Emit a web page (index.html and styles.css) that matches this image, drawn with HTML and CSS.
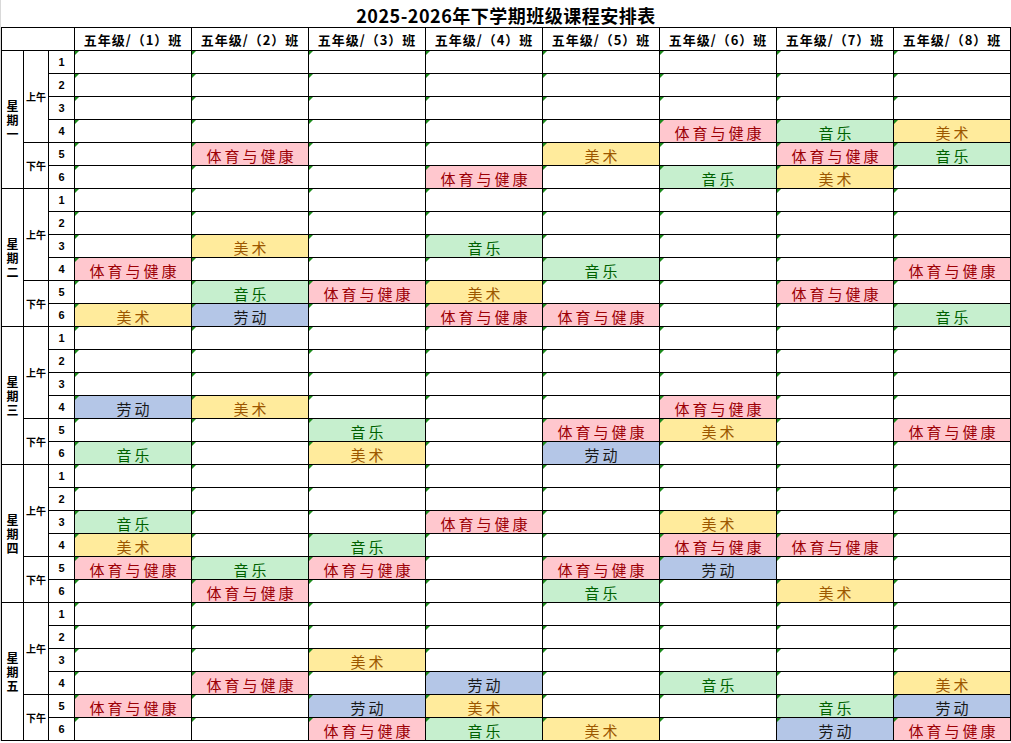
FILE: index.html
```html
<!DOCTYPE html>
<html lang="zh-CN">
<head>
<meta charset="utf-8">
<title>2025-2026年下学期班级课程安排表</title>
<link rel="stylesheet" href="styles.css">
</head>
<body>
<div class="page">
  <h1 class="title">2025-2026年下学期班级课程安排表</h1>
  <div class="sheet">
    <div class="corner"></div>
    <div class="h">五年级/（1）班</div><div class="h">五年级/（2）班</div><div class="h">五年级/（3）班</div><div class="h">五年级/（4）班</div><div class="h">五年级/（5）班</div><div class="h">五年级/（6）班</div><div class="h">五年级/（7）班</div><div class="h">五年级/（8）班</div>

    <!-- 星期一 -->
    <div class="day">星<br>期<br>一</div>
    <div class="half am">上午</div>
    <div class="n">1</div><div class="c"></div><div class="c"></div><div class="c"></div><div class="c"></div><div class="c"></div><div class="c"></div><div class="c"></div><div class="c"></div>
    <div class="n">2</div><div class="c"></div><div class="c"></div><div class="c"></div><div class="c"></div><div class="c"></div><div class="c"></div><div class="c"></div><div class="c"></div>
    <div class="n">3</div><div class="c"></div><div class="c"></div><div class="c"></div><div class="c"></div><div class="c"></div><div class="c"></div><div class="c"></div><div class="c"></div>
    <div class="n">4</div><div class="c"></div><div class="c"></div><div class="c"></div><div class="c"></div><div class="c"></div><div class="c pe">体育与健康</div><div class="c gr">音乐</div><div class="c ye">美术</div>
    <div class="half pm">下午</div>
    <div class="n">5</div><div class="c"></div><div class="c pe">体育与健康</div><div class="c"></div><div class="c"></div><div class="c ye">美术</div><div class="c"></div><div class="c pe">体育与健康</div><div class="c gr">音乐</div>
    <div class="n">6</div><div class="c"></div><div class="c"></div><div class="c"></div><div class="c pe">体育与健康</div><div class="c"></div><div class="c gr">音乐</div><div class="c ye">美术</div><div class="c"></div>

    <!-- 星期二 -->
    <div class="day">星<br>期<br>二</div>
    <div class="half am">上午</div>
    <div class="n">1</div><div class="c"></div><div class="c"></div><div class="c"></div><div class="c"></div><div class="c"></div><div class="c"></div><div class="c"></div><div class="c"></div>
    <div class="n">2</div><div class="c"></div><div class="c"></div><div class="c"></div><div class="c"></div><div class="c"></div><div class="c"></div><div class="c"></div><div class="c"></div>
    <div class="n">3</div><div class="c"></div><div class="c ye">美术</div><div class="c"></div><div class="c gr">音乐</div><div class="c"></div><div class="c"></div><div class="c"></div><div class="c"></div>
    <div class="n">4</div><div class="c pe">体育与健康</div><div class="c"></div><div class="c"></div><div class="c"></div><div class="c gr">音乐</div><div class="c"></div><div class="c"></div><div class="c pe">体育与健康</div>
    <div class="half pm">下午</div>
    <div class="n">5</div><div class="c"></div><div class="c gr">音乐</div><div class="c pe">体育与健康</div><div class="c ye">美术</div><div class="c"></div><div class="c"></div><div class="c pe">体育与健康</div><div class="c"></div>
    <div class="n">6</div><div class="c ye">美术</div><div class="c bl">劳动</div><div class="c"></div><div class="c pe">体育与健康</div><div class="c pe">体育与健康</div><div class="c"></div><div class="c"></div><div class="c gr">音乐</div>

    <!-- 星期三 -->
    <div class="day">星<br>期<br>三</div>
    <div class="half am">上午</div>
    <div class="n">1</div><div class="c"></div><div class="c"></div><div class="c"></div><div class="c"></div><div class="c"></div><div class="c"></div><div class="c"></div><div class="c"></div>
    <div class="n">2</div><div class="c"></div><div class="c"></div><div class="c"></div><div class="c"></div><div class="c"></div><div class="c"></div><div class="c"></div><div class="c"></div>
    <div class="n">3</div><div class="c"></div><div class="c"></div><div class="c"></div><div class="c"></div><div class="c"></div><div class="c"></div><div class="c"></div><div class="c"></div>
    <div class="n">4</div><div class="c bl">劳动</div><div class="c ye">美术</div><div class="c"></div><div class="c"></div><div class="c"></div><div class="c pe">体育与健康</div><div class="c"></div><div class="c"></div>
    <div class="half pm">下午</div>
    <div class="n">5</div><div class="c"></div><div class="c"></div><div class="c gr">音乐</div><div class="c"></div><div class="c pe">体育与健康</div><div class="c ye">美术</div><div class="c"></div><div class="c pe">体育与健康</div>
    <div class="n">6</div><div class="c gr">音乐</div><div class="c"></div><div class="c ye">美术</div><div class="c"></div><div class="c bl">劳动</div><div class="c"></div><div class="c"></div><div class="c"></div>

    <!-- 星期四 -->
    <div class="day">星<br>期<br>四</div>
    <div class="half am">上午</div>
    <div class="n">1</div><div class="c"></div><div class="c"></div><div class="c"></div><div class="c"></div><div class="c"></div><div class="c"></div><div class="c"></div><div class="c"></div>
    <div class="n">2</div><div class="c"></div><div class="c"></div><div class="c"></div><div class="c"></div><div class="c"></div><div class="c"></div><div class="c"></div><div class="c"></div>
    <div class="n">3</div><div class="c gr">音乐</div><div class="c"></div><div class="c"></div><div class="c pe">体育与健康</div><div class="c"></div><div class="c ye">美术</div><div class="c"></div><div class="c"></div>
    <div class="n">4</div><div class="c ye">美术</div><div class="c"></div><div class="c gr">音乐</div><div class="c"></div><div class="c"></div><div class="c pe">体育与健康</div><div class="c pe">体育与健康</div><div class="c"></div>
    <div class="half pm">下午</div>
    <div class="n">5</div><div class="c pe">体育与健康</div><div class="c gr">音乐</div><div class="c pe">体育与健康</div><div class="c"></div><div class="c pe">体育与健康</div><div class="c bl">劳动</div><div class="c"></div><div class="c"></div>
    <div class="n">6</div><div class="c"></div><div class="c pe">体育与健康</div><div class="c"></div><div class="c"></div><div class="c gr">音乐</div><div class="c"></div><div class="c ye">美术</div><div class="c"></div>

    <!-- 星期五 -->
    <div class="day">星<br>期<br>五</div>
    <div class="half am">上午</div>
    <div class="n">1</div><div class="c"></div><div class="c"></div><div class="c"></div><div class="c"></div><div class="c"></div><div class="c"></div><div class="c"></div><div class="c"></div>
    <div class="n">2</div><div class="c"></div><div class="c"></div><div class="c"></div><div class="c"></div><div class="c"></div><div class="c"></div><div class="c"></div><div class="c"></div>
    <div class="n">3</div><div class="c"></div><div class="c"></div><div class="c ye">美术</div><div class="c"></div><div class="c"></div><div class="c"></div><div class="c"></div><div class="c"></div>
    <div class="n">4</div><div class="c"></div><div class="c pe">体育与健康</div><div class="c"></div><div class="c bl">劳动</div><div class="c"></div><div class="c gr">音乐</div><div class="c"></div><div class="c ye">美术</div>
    <div class="half pm">下午</div>
    <div class="n">5</div><div class="c pe">体育与健康</div><div class="c"></div><div class="c bl">劳动</div><div class="c ye">美术</div><div class="c"></div><div class="c"></div><div class="c gr">音乐</div><div class="c bl">劳动</div>
    <div class="n">6</div><div class="c"></div><div class="c"></div><div class="c pe">体育与健康</div><div class="c gr">音乐</div><div class="c ye">美术</div><div class="c"></div><div class="c bl">劳动</div><div class="c pe">体育与健康</div>
  </div>
</div>
</body>
</html>
```

FILE: styles.css
```css
html, body {
  margin: 0;
  padding: 0;
  background: #ffffff;
}

.page {
  border-left: 1px solid #d9d9d9;
  width: 1010px;
  font-family: "Noto Sans CJK SC", "Liberation Sans", sans-serif;
  color: #000;
}

.title {
  margin: 0;
  height: 27px;
  box-sizing: border-box;
  padding-top: 4px;
  line-height: 23px;
  font-size: 18px;
  font-weight: bold;
  letter-spacing: 0.5px;
  text-align: center;
}

.sheet {
  display: grid;
  grid-template-columns: 21px 24px 25px repeat(8, 116px);
  grid-auto-rows: 22px;
  gap: 1px;
  padding: 1px;
  background: #000;
  width: max-content;
}

.sheet > div {
  background: #fff;
  display: flex;
  align-items: center;
  justify-content: center;
  overflow: hidden;
}

.corner {
  grid-column: span 3;
}

.h {
  font-size: 13px;
  font-weight: bold;
  letter-spacing: 1px;
  white-space: nowrap;
}

.day {
  grid-row: span 6;
  font-size: 12px;
  font-weight: bold;
  line-height: 14px;
  text-align: center;
}

.half {
  font-size: 10px;
  font-weight: bold;
  white-space: nowrap;
}

.am {
  grid-row: span 4;
}

.pm {
  grid-row: span 2;
}

.n {
  font-family: "Liberation Sans", "DejaVu Sans", sans-serif;
  font-size: 11px;
  font-weight: bold;
}

.c {
  position: relative;
  font-size: 15px;
  letter-spacing: 3px;
  text-indent: 3px;
  padding-top: 2px;
  box-sizing: border-box;
  white-space: nowrap;
}

.c::before {
  content: "";
  position: absolute;
  left: 0;
  top: 0;
  border-top: 4px solid #1c8c1c;
  border-right: 4px solid transparent;
}

.sheet > .pe { background: #ffc7ce; color: #9c0006; }
.sheet > .gr { background: #c6efce; color: #006100; }
.sheet > .ye { background: #ffeb9c; color: #9c5700; }
.sheet > .bl { background: #b4c6e7; color: #1a1a1a; }
```
